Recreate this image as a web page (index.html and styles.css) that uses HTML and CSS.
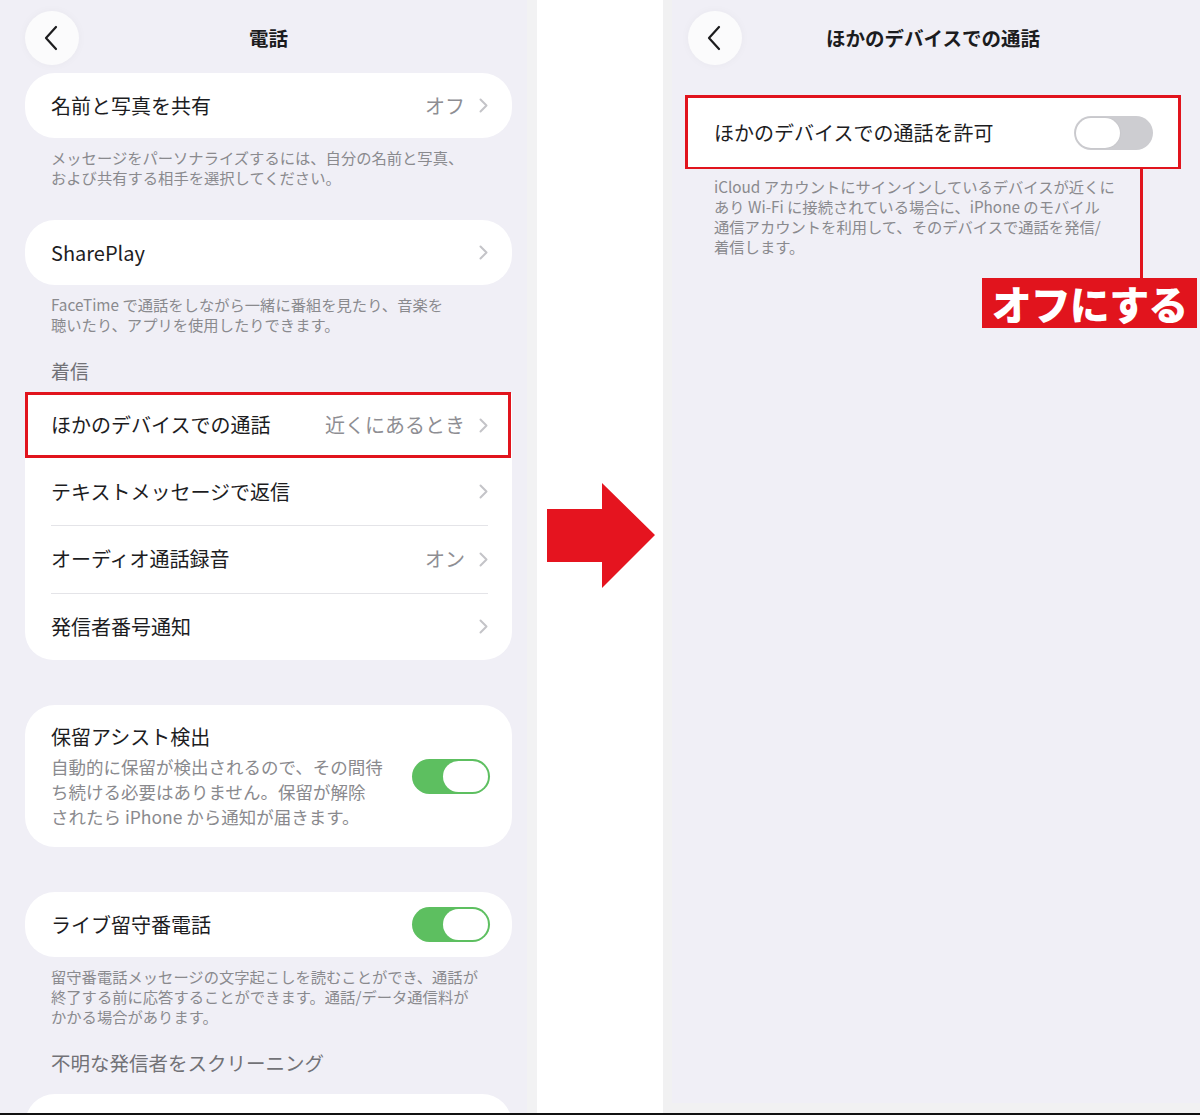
FILE: index.html
```html
<!DOCTYPE html>
<html lang="ja">
<head>
<meta charset="utf-8">
<title>電話 設定</title>
<link rel="stylesheet" href="styles.css">
</head>
<body>
<div class="stage">
  <section class="phone phone--left">
    <header class="nav">
      <span class="back"><svg width="14" height="26" viewBox="0 0 14 26"><polyline points="12,2 2,13 12,24" fill="none" stroke="#1c1c1e" stroke-width="2.2" stroke-linecap="round" stroke-linejoin="round"/></svg></span>
      <h1 class="nav__title">電話</h1>
      <span class="nav__spacer"></span>
    </header>

    <div class="card card--first">
      <div class="row">
        <span class="row__label">名前と写真を共有</span>
        <span class="row__value">オフ</span>
        <svg class="chev" width="9" height="15" viewBox="0 0 9 15"><polyline points="1.5,1.5 7.5,7.5 1.5,13.5" fill="none" stroke="#c4c4c8" stroke-width="2" stroke-linecap="round" stroke-linejoin="round"/></svg>
      </div>
    </div>
    <p class="footnote">メッセージをパーソナライズするには、自分の名前と写真、<br>および共有する相手を選択してください。</p>

    <div class="card card--spaced">
      <div class="row">
        <span class="row__label">SharePlay</span>
        <svg class="chev" width="9" height="15" viewBox="0 0 9 15"><polyline points="1.5,1.5 7.5,7.5 1.5,13.5" fill="none" stroke="#c4c4c8" stroke-width="2" stroke-linecap="round" stroke-linejoin="round"/></svg>
      </div>
    </div>
    <p class="footnote">FaceTime で通話をしながら一緒に番組を見たり、音楽を<br>聴いたり、アプリを使用したりできます。</p>

    <h2 class="section">着信</h2>
    <div class="card card--marked">
      <div class="row row--tall row--marked">
        <span class="row__label">ほかのデバイスでの通話</span>
        <span class="row__value">近くにあるとき</span>
        <svg class="chev" width="9" height="15" viewBox="0 0 9 15"><polyline points="1.5,1.5 7.5,7.5 1.5,13.5" fill="none" stroke="#c4c4c8" stroke-width="2" stroke-linecap="round" stroke-linejoin="round"/></svg>
      </div>
      <div class="row row--tall">
        <span class="row__label">テキストメッセージで返信</span>
        <svg class="chev" width="9" height="15" viewBox="0 0 9 15"><polyline points="1.5,1.5 7.5,7.5 1.5,13.5" fill="none" stroke="#c4c4c8" stroke-width="2" stroke-linecap="round" stroke-linejoin="round"/></svg>
      </div>
      <div class="sep"></div>
      <div class="row row--tall">
        <span class="row__label">オーディオ通話録音</span>
        <span class="row__value">オン</span>
        <svg class="chev" width="9" height="15" viewBox="0 0 9 15"><polyline points="1.5,1.5 7.5,7.5 1.5,13.5" fill="none" stroke="#c4c4c8" stroke-width="2" stroke-linecap="round" stroke-linejoin="round"/></svg>
      </div>
      <div class="sep"></div>
      <div class="row row--tall">
        <span class="row__label">発信者番号通知</span>
        <svg class="chev" width="9" height="15" viewBox="0 0 9 15"><polyline points="1.5,1.5 7.5,7.5 1.5,13.5" fill="none" stroke="#c4c4c8" stroke-width="2" stroke-linecap="round" stroke-linejoin="round"/></svg>
      </div>
    </div>

    <div class="card card--block">
      <div class="row row--multi">
        <div class="row__text">
          <span class="row__label">保留アシスト検出</span>
          <p class="row__desc">自動的に保留が検出されるので、その間待<br>ち続ける必要はありません。保留が解除<br>されたら iPhone から通知が届きます。</p>
        </div>
        <span class="switch switch--on"><span class="knob"></span></span>
      </div>
    </div>

    <div class="card card--block">
      <div class="row">
        <span class="row__label">ライブ留守番電話</span>
        <span class="switch switch--on"><span class="knob"></span></span>
      </div>
    </div>
    <p class="footnote">留守番電話メッセージの文字起こしを読むことができ、通話が<br>終了する前に応答することができます。通話/データ通信料が<br>かかる場合があります。</p>

    <h2 class="section section--low">不明な発信者をスクリーニング</h2>
    <div class="card card--cut">
      <div class="row row--cut">
        <span class="row__label">しない</span>
      </div>
    </div>
  </section>

  <div class="gutter">
    <svg class="arrow" width="108" height="105" viewBox="0 0 108 105"><polygon points="0,26 55,26 55,0 108,52 55,105 55,79 0,79" fill="#e5141f"/></svg>
  </div>

  <section class="phone phone--right">
    <header class="nav nav--right">
      <span class="back"><svg width="14" height="26" viewBox="0 0 14 26"><polyline points="12,2 2,13 12,24" fill="none" stroke="#1c1c1e" stroke-width="2.2" stroke-linecap="round" stroke-linejoin="round"/></svg></span>
      <h1 class="nav__title">ほかのデバイスでの通話</h1>
      <span class="nav__spacer"></span>
    </header>

    <div class="callout">
      <div class="card card--square">
        <div class="row row--allow">
          <span class="row__label">ほかのデバイスでの通話を許可</span>
          <span class="switch switch--off"><span class="knob"></span></span>
        </div>
      </div>
    </div>
    <p class="footnote footnote--right">iCloud アカウントにサインインしているデバイスが近くに<br>あり Wi-Fi に接続されている場合に、iPhone のモバイル<br>通信アカウントを利用して、そのデバイスで通話を発信/<br>着信します。</p>

    <span class="leader"></span>
    <span class="tag">オフにする</span>
  </section>
</div>
<div class="baseline"></div>
</body>
</html>
```
FILE: styles.css
```css
* { box-sizing: border-box; }

html, body {
  margin: 0;
  padding: 0;
}

body {
  width: 1200px;
  height: 1115px;
  overflow: hidden;
  background: #ffffff;
  font-family: "Noto Sans CJK JP", "Noto Sans", sans-serif;
  color: #1d1d1f;
}

.stage {
  display: flex;
  height: 1113px;
}

.baseline {
  height: 2px;
  background: #111;
}

.phone {
  width: 537px;
  height: 1113px;
  background: #f0eff6;
  display: flex;
  flex-direction: column;
  overflow: hidden;
  position: relative;
}

.phone--left {
  padding: 0 15px 0 25px;
  border-right: 10px solid #f2f2f3;
}

.phone--right {
  padding: 0 22px 0 16px;
  border-left: 9px solid #f1f1f2;
  border-bottom: 10px solid #f1f1f2;
}

.gutter {
  width: 126px;
  background: #ffffff;
  display: flex;
  align-items: flex-start;
  padding: 483px 0 0 10px;
}

/* nav */
.nav {
  display: flex;
  align-items: center;
  padding-top: 11px;
  height: 65px;
  flex-shrink: 0;
}

.back {
  width: 54px;
  height: 54px;
  border-radius: 50%;
  background: #fbfbfc;
  box-shadow: 0 0 10px rgba(0, 0, 0, 0.035);
  display: flex;
  align-items: center;
  justify-content: center;
  padding-right: 3px;
  flex-shrink: 0;
}

.nav__title {
  flex: 1;
  margin: 0;
  text-align: center;
  font-size: 19.5px;
  font-weight: 700;
  color: #1c1c1e;
  line-height: 26px;
}

.nav__spacer {
  width: 54px;
  flex-shrink: 0;
}

/* cards */
.card {
  background: #ffffff;
  border-radius: 30px;
  flex-shrink: 0;
}

.card--first { margin-top: 8px; }
.card--spaced { margin-top: 33px; }
.card--block { margin-top: 45px; }

.card--marked {
  border-top-left-radius: 3px;
  border-top-right-radius: 3px;
  border-bottom-left-radius: 28px;
  border-bottom-right-radius: 28px;
}

.card--cut {
  margin-top: 9px;
  height: 60px;
  border-radius: 30px 30px 0 0;
}

.card--square {
  border-radius: 0;
}

.row {
  display: flex;
  align-items: center;
  height: 65px;
  padding: 0 24px 0 26px;
  position: relative;
}

.row--tall { height: 66.5px; }

.row--cut {
  align-items: flex-start;
  padding-top: 16px;
}

.row--marked::after {
  content: "";
  position: absolute;
  left: 0;
  right: 1px;
  top: 0;
  bottom: 1px;
  border: 3px solid #e1141d;
}

.row--multi {
  height: auto;
  padding-top: 19px;
  padding-bottom: 18px;
  align-items: center;
}

.row--allow {
  height: 69px;
  padding: 0 25px 0 26px;
}

.row__text {
  flex: 1;
  display: flex;
  flex-direction: column;
}

.row__label {
  flex: 1;
  font-size: 20px;
  line-height: 26px;
  color: #1d1d1f;
  white-space: nowrap;
}

.row__text .row__label { flex: none; }

.row__desc {
  margin: 4px 0 0;
  font-size: 17.5px;
  line-height: 25px;
  color: #8a8a8e;
  white-space: nowrap;
}

.row__value {
  font-size: 20px;
  line-height: 26px;
  color: #8e8e93;
  margin-right: 14px;
  white-space: nowrap;
}

.chev { flex-shrink: 0; }

.sep {
  height: 1px;
  background: #e4e4e8;
  margin: 0 24px 0 26px;
}

/* switches */
.switch {
  display: flex;
  align-items: center;
  width: 78px;
  height: 35px;
  border-radius: 18px;
  padding: 2px;
  flex-shrink: 0;
  margin-right: -2px;
}

.switch--on {
  background: #5dbf60;
  justify-content: flex-end;
}

.switch--off {
  background: #cdcdd1;
  justify-content: flex-start;
  width: 79px;
  height: 34px;
  margin-right: 0;
}

.knob {
  width: 45px;
  height: 31px;
  border-radius: 16px;
  background: #ffffff;
}

.switch--off .knob {
  width: 44px;
  height: 30px;
  box-shadow: 0 0 2px rgba(0, 0, 0, 0.08);
}

/* texts */
.footnote {
  margin: 0;
  padding: 9px 0 0 26px;
  font-size: 15.3px;
  line-height: 20px;
  color: #8a8a8e;
  white-space: nowrap;
  flex-shrink: 0;
}

.footnote--right {
  padding-top: 7px;
  padding-left: 26px;
}

.section {
  margin: 25px 0 9px;
  padding-left: 26px;
  font-size: 19px;
  font-weight: 400;
  line-height: 24px;
  color: #727277;
  flex-shrink: 0;
}

.section--low {
  margin-top: 24px;
  line-height: 26px;
  font-size: 19.5px;
}

/* annotation on right */
.callout {
  margin-top: 30px;
  margin-left: -3px;
  margin-right: -3px;
  border: 3px solid #e1141d;
  border-bottom-width: 2px;
  flex-shrink: 0;
}

.leader {
  position: absolute;
  left: 468px;
  top: 169px;
  width: 3px;
  height: 110px;
  background: #e1141d;
}

.tag {
  position: absolute;
  left: 310px;
  top: 278px;
  width: 215px;
  height: 50px;
  background: #e1141d;
  color: #ffffff;
  font-size: 40px;
  font-weight: 900;
  line-height: 50px;
  text-align: center;
  letter-spacing: -1px;
}
```
